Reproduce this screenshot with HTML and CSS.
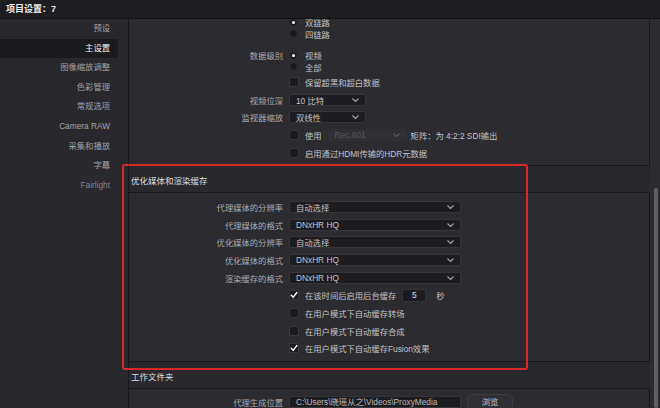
FILE: index.html
```html
<!DOCTYPE html>
<html lang="zh">
<head>
<meta charset="utf-8">
<title>项目设置</title>
<link rel="stylesheet" href="styles.css">
</head>
<body>
<header class="titlebar">项目设置：7</header>
<div class="main">
  <nav class="sidebar">
    <div class="nav-item">预设</div>
    <div class="nav-item active">主设置</div>
    <div class="nav-item">图像缩放调整</div>
    <div class="nav-item">色彩管理</div>
    <div class="nav-item">常规选项</div>
    <div class="nav-item">Camera RAW</div>
    <div class="nav-item">采集和播放</div>
    <div class="nav-item">字幕</div>
    <div class="nav-item dim">Fairlight</div>
  </nav>
  <div class="content">
    <div class="scroll">
      <section class="panel panel-top">
        <div class="inner">
          <div class="row r"><span class="label"></span><div class="ctrl"><span class="radio on"></span><span class="opt">双链路</span></div></div>
          <div class="row r"><span class="label"></span><div class="ctrl"><span class="radio"></span><span class="opt">四链路</span></div></div>
          <div class="row r gap"><span class="label">数据级别</span><div class="ctrl"><span class="radio on"></span><span class="opt">视频</span></div></div>
          <div class="row r"><span class="label"></span><div class="ctrl"><span class="radio"></span><span class="opt">全部</span></div></div>
          <div class="row gap1"><span class="label"></span><div class="ctrl"><span class="check"></span><span class="opt">保留超黑和超白数据</span></div></div>
          <div class="row"><span class="label">视频位深</span><div class="ctrl"><div class="select w1"><span>10 比特</span><svg class="chev" width="7" height="4" viewBox="0 0 7 4"><polyline points="0.5,0.5 3.5,3.5 6.5,0.5"/></svg></div></div></div>
          <div class="row"><span class="label">监视器缩放</span><div class="ctrl"><div class="select w1"><span>双线性</span><svg class="chev" width="7" height="4" viewBox="0 0 7 4"><polyline points="0.5,0.5 3.5,3.5 6.5,0.5"/></svg></div></div></div>
          <div class="row"><span class="label"></span><div class="ctrl"><span class="check"></span><span class="opt">使用</span><div class="select disabled"><span>Rec.601</span><svg class="chev dis" width="7" height="4" viewBox="0 0 7 4"><polyline points="0.5,0.5 3.5,3.5 6.5,0.5"/></svg></div><span class="opt">矩阵：为 4:2:2 SDI输出</span></div></div>
          <div class="row"><span class="label"></span><div class="ctrl"><span class="check"></span><span class="opt">启用通过HDMI传输的HDR元数据</span></div></div>
        </div>
      </section>

      <h2 class="section-title">优化媒体和渲染缓存</h2>
      <section class="panel panel-mid">
        <div class="row"><span class="label">代理媒体的分辨率</span><div class="ctrl"><div class="select w2"><span>自动选择</span><svg class="chev" width="7" height="4" viewBox="0 0 7 4"><polyline points="0.5,0.5 3.5,3.5 6.5,0.5"/></svg></div></div></div>
        <div class="row"><span class="label">代理媒体的格式</span><div class="ctrl"><div class="select w2"><span>DNxHR HQ</span><svg class="chev" width="7" height="4" viewBox="0 0 7 4"><polyline points="0.5,0.5 3.5,3.5 6.5,0.5"/></svg></div></div></div>
        <div class="row"><span class="label">优化媒体的分辨率</span><div class="ctrl"><div class="select w2"><span>自动选择</span><svg class="chev" width="7" height="4" viewBox="0 0 7 4"><polyline points="0.5,0.5 3.5,3.5 6.5,0.5"/></svg></div></div></div>
        <div class="row"><span class="label">优化媒体的格式</span><div class="ctrl"><div class="select w2"><span>DNxHR HQ</span><svg class="chev" width="7" height="4" viewBox="0 0 7 4"><polyline points="0.5,0.5 3.5,3.5 6.5,0.5"/></svg></div></div></div>
        <div class="row"><span class="label">渲染缓存的格式</span><div class="ctrl"><div class="select w2"><span>DNxHR HQ</span><svg class="chev" width="7" height="4" viewBox="0 0 7 4"><polyline points="0.5,0.5 3.5,3.5 6.5,0.5"/></svg></div></div></div>
        <div class="row"><span class="label"></span><div class="ctrl"><span class="check on"><svg width="8" height="8" viewBox="0 0 8 8"><polyline points="1.3,4.2 3.2,6.2 6.8,1.6"/></svg></span><span class="opt">在该时间后启用后台缓存</span><span class="num">5</span><span class="opt">秒</span></div></div>
        <div class="row"><span class="label"></span><div class="ctrl"><span class="check"></span><span class="opt">在用户模式下自动缓存转场</span></div></div>
        <div class="row"><span class="label"></span><div class="ctrl"><span class="check"></span><span class="opt">在用户模式下自动缓存合成</span></div></div>
        <div class="row"><span class="label"></span><div class="ctrl"><span class="check on"><svg width="8" height="8" viewBox="0 0 8 8"><polyline points="1.3,4.2 3.2,6.2 6.8,1.6"/></svg></span><span class="opt">在用户模式下自动缓存Fusion效果</span></div></div>
      </section>

      <h2 class="section-title">工作文件夹</h2>
      <section class="panel panel-bottom">
        <div class="row"><span class="label">代理生成位置</span><div class="ctrl"><div class="field">C:\Users\晓瑶从之\Videos\ProxyMedia</div><span class="btn">浏览</span></div></div>
      </section>
    </div>
    <div class="scrollbar"><div class="thumb"></div></div>
  </div>
</div>
<div class="highlight"></div>
</body>
</html>
```

FILE: styles.css
```css
* { box-sizing: border-box; margin: 0; padding: 0; }

html, body { width: 660px; height: 408px; overflow: hidden; }

body {
  background: #28282d;
  font-family: "Liberation Sans", "Noto Sans CJK SC", sans-serif;
  font-size: 8.3px;
  color: #b4b4b8;
  position: relative;
}

.titlebar {
  height: 19px;
  background: #1e1e21;
  border-bottom: 1px solid #121214;
  color: #ececec;
  font-weight: bold;
  font-size: 9px;
  line-height: 18px;
  padding-left: 6px;
}

.main { display: flex; height: 389px; }

.sidebar {
  width: 129px;
  flex: none;
  border-right: 1px solid #18181b;
  background: #28282d;
}

.nav-item {
  width: 118px;
  height: 19.6px;
  line-height: 19.6px;
  text-align: right;
  padding-right: 8px;
  color: #a2a2a6;
  white-space: nowrap;
}
.nav-item.active { background: #1b1b1e; color: #f2f2f2; }
.nav-item.dim { color: #86868b; }

.content { flex: 1; display: flex; min-width: 0; }

.scroll {
  flex: 1;
  display: flex;
  flex-direction: column;
  overflow: hidden;
  min-width: 0;
}

.scrollbar {
  width: 10px;
  flex: none;
  background: #2b2b30;
  padding: 169px 2px 0 4px;
}
.thumb { height: 100%; width: 4px; background: #5f5f65; border-radius: 2px; }

.panel {
  background: #2b2b30;
  border: 1px solid #19191c;
  border-left: none;
  flex: none;
}
.panel-top { height: 147px; border-top: none; overflow: hidden; }
.panel-top .inner { margin-top: -3px; }
.panel-top .row { height: 17.8px; }
.panel-top .row.r { height: 11.5px; }
.panel-mid { padding: 5px 0 4px; }
.panel-bottom { padding-top: 4px; flex: 1; }

.section-title {
  height: 26px;
  padding: 5px 0 0 2px;
  line-height: 20px;
  font-size: 8.5px;
  font-weight: normal;
  color: #dedee0;
  flex: none;
}

.row {
  display: grid;
  grid-template-columns: 154px 1fr;
  column-gap: 6px;
  align-items: center;
  height: 17.7px;
}
.row.gap { margin-top: 10px; }
.row.gap1 { margin-top: 1px; }

.label { text-align: right; color: #aaaaae; white-space: nowrap; }

.ctrl { display: flex; align-items: center; white-space: nowrap; }

.opt { color: #c2c2c6; }

.radio {
  width: 9px;
  height: 9px;
  border-radius: 50%;
  background: #1b1b1f;
  border: 1px solid #303035;
  margin-right: 7px;
  display: flex;
  align-items: center;
  justify-content: center;
  flex: none;
}
.radio.on::after {
  content: "";
  width: 3px;
  height: 3px;
  border-radius: 50%;
  background: #ffffff;
}

.check {
  width: 10px;
  height: 10px;
  background: #1c1c20;
  border: 1px solid #38383d;
  border-radius: 1px;
  margin-right: 6px;
  flex: none;
  display: flex;
  align-items: center;
  justify-content: center;
}
.check svg polyline { fill: none; stroke: #ffffff; stroke-width: 1.5; stroke-linecap: round; stroke-linejoin: round; }

.select {
  height: 12px;
  background: #1d1d21;
  border: 1px solid #35353a;
  border-radius: 2px;
  display: flex;
  align-items: center;
  justify-content: space-between;
  padding: 0 6px;
  color: #c4c4c8;
  flex: none;
}
.select.w1 { width: 77px; }
.select.w2 { width: 172px; }
.select.disabled {
  width: 79px;
  background: #2f2f34;
  border-color: #2f2f34;
  color: #58585d;
  margin-left: 6px;
  margin-right: 4px;
}

.chev polyline { fill: none; stroke: #9c9ca2; stroke-width: 1.2; }
.chev.dis polyline { stroke: #55555a; }

.num {
  width: 24px;
  height: 13px;
  background: #1c1c20;
  border: 1px solid #333338;
  border-radius: 2px;
  color: #e0e0e0;
  text-align: center;
  line-height: 11px;
  margin: 0 10px 0 6px;
}

.field {
  width: 172px;
  height: 12px;
  background: #1d1d21;
  border: 1px solid #35353a;
  border-radius: 2px;
  padding-left: 6px;
  line-height: 10px;
  color: #b8b8bc;
  overflow: hidden;
}

.btn {
  width: 46px;
  height: 16px;
  margin-left: 6px;
  background: #2f2f34;
  border: 1px solid #3d3d43;
  border-radius: 5px;
  text-align: center;
  line-height: 14px;
  color: #c8c8cc;
}

.highlight {
  position: absolute;
  left: 122px;
  top: 164px;
  width: 406px;
  height: 206px;
  border: 2px solid #d9282a;
  border-radius: 3px;
  pointer-events: none;
}
```
